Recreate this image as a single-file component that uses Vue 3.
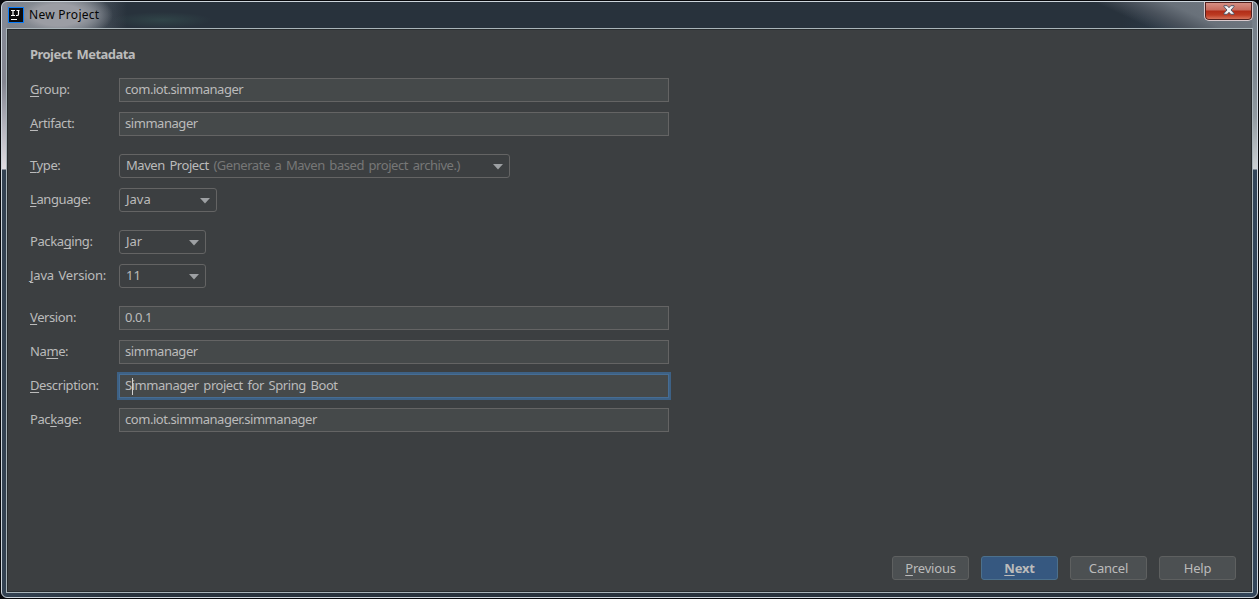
<script setup>
const groups = [
  [
    { pre: '', key: 'G', post: 'roup:', kind: 'input', value: 'com.iot.simmanager' },
    { pre: '', key: 'A', post: 'rtifact:', kind: 'input', value: 'simmanager' },
  ],
  [
    { pre: '', key: 'T', post: 'ype:', kind: 'select', size: 'wide', value: 'Maven Project', note: '(Generate a Maven based project archive.)' },
    { pre: '', key: 'L', post: 'anguage:', kind: 'select', size: 'medium', value: 'Java' },
  ],
  [
    { pre: 'Packa', key: 'g', post: 'ing:', kind: 'select', size: 'small', value: 'Jar' },
    { pre: '', key: 'J', post: 'ava Version:', kind: 'select', size: 'small', value: '11', loose: true },
  ],
  [
    { pre: '', key: 'V', post: 'ersion:', kind: 'input', value: '0.0.1' },
    { pre: 'Na', key: 'm', post: 'e:', kind: 'input', value: 'simmanager' },
    { pre: '', key: 'D', post: 'escription:', kind: 'input', value: 'Simmanager project for Spring Boot', focused: true },
    { pre: 'Pac', key: 'k', post: 'age:', kind: 'input', value: 'com.iot.simmanager.simmanager' },
  ],
]
</script>

<template>
  <div class="desktop">
    <div class="window">
      <header class="titlebar">
        <svg class="logo" width="16" height="16" viewBox="0 0 16 16">
          <rect width="16" height="16" fill="#087cfa" />
          <rect x="1" y="1" width="14" height="14" fill="#0b0b0d" />
          <path d="M3 3.5h4M5 3.5v5M3 8.5h4M8.5 3.5h3M10.5 3.5v3.7q0 1.3-1.3 1.3H8" fill="none" stroke="#fff" stroke-width="1.2" />
          <path d="M3 12.500h6" stroke="#fff" stroke-width="1" />
        </svg>
        <span class="title">New Project</span>
        <div class="close">
          <svg width="12" height="10" viewBox="0 0 12 10">
            <path d="M1 .7h3.2L6 2.7 7.800 .7H11v1L8 5l3 3.300v1H7.800L6 7.300l-1.800 2H1v-1L4 5 1 1.700z" fill="#f4f4f6" stroke="#535666" stroke-width="1" />
          </svg>
        </div>
      </header>
      <main class="dialog">
        <h1 class="heading">Project Metadata</h1>
        <div class="form">
          <section v-for="(rows, i) in groups" :key="i" class="group">
            <div v-for="row in rows" :key="row.pre + row.key + row.post" class="row">
              <label class="label" :class="{ loose: row.loose }">{{ row.pre }}<span class="mn">{{ row.key }}</span>{{ row.post }}</label>
              <div v-if="row.kind === 'input'" class="input" :class="{ focused: row.focused }">
                <span>{{ row.value }}</span><i v-if="row.focused" class="caret"></i>
              </div>
              <div v-else class="select" :class="row.size">
                <span>{{ row.value }}<span v-if="row.note" class="note">&nbsp;{{ row.note }}</span></span>
                <svg class="arrow" width="10" height="6" viewBox="0 0 10 6"><path d="M0 0h10L5 5.500z" fill="#9da0a3" /></svg>
              </div>
            </div>
          </section>
        </div>
        <footer class="actions">
          <div class="button"><span class="mn">P</span>revious</div>
          <div class="button primary"><span class="mn">N</span>ext</div>
          <div class="button">Cancel</div>
          <div class="button">Help</div>
        </footer>
      </main>
    </div>
  </div>
</template>

<style>
body { background: #050608; overflow: hidden; }
</style>

<style scoped>
* { box-sizing: border-box; }
.desktop {
  width: 1259px;
  height: 599px;
  padding: 1px;
  background: #08090c;
  font-family: "Noto Sans", "Open Sans", sans-serif;
  font-size: 13px;
  color: #bbbbbb;
}
.window {
  width: 1257px;
  height: 597px;
  border: 1px solid #cdd5dc;
  border-radius: 6px;
  padding: 0 4px 4px;
  background:
    linear-gradient(180deg, #848a97 0, #838590 80px, #b5b5be 125px, #e0dde2 167px, transparent 168px) 0 0 / 5px 170px no-repeat,
    linear-gradient(180deg, #737c86 0, #7c868f 70px, #929ba1 115px, #ccd0d3 167px, transparent 168px) 100% 0 / 5px 170px no-repeat,
    radial-gradient(ellipse 54px 24px at 56px 13px, #9b9da4 45%, #858a92 65%, transparent 102%) 0 0 / 200px 26px no-repeat,
    linear-gradient(90deg, #7f858f 0, #6b717a 60px, transparent 125px) 0 0 / 200px 26px no-repeat,
    radial-gradient(ellipse 50px 8px at 160px 18px, #304448, transparent) 0 0 / 300px 26px no-repeat,
    linear-gradient(25deg, transparent 35%, #4a525c 50%, #69717a 64%, #747b84 100%) 100% 0 / 195px 26px no-repeat,
    linear-gradient(90deg, #334252 0, #28323c 120px, #28323c 1120px, #33465a 100%);
}
.titlebar {
  height: 26px;
  display: flex;
  align-items: flex-start;
  padding-left: 2px;
}
.logo { margin-top: 5px; flex: none; }
.title {
  margin-left: 5px;
  line-height: 25px;
  font-size: 12px;
  letter-spacing: 0.28px;
  color: #050505;
}
.close {
  margin-left: auto;
  width: 49px;
  height: 19px;
  border: 1px solid #d9c9cc;
  border-top: 0;
  border-radius: 0 0 5px 5px;
  box-shadow: inset 0 0 0 1px #54201d;
  background: linear-gradient(#d89489 0, #c66b5d 8px, #b12c18 9px, #bd3b22 13px, #dc8068 18px);
  display: flex;
  justify-content: center;
  padding-top: 3px;
}
.dialog {
  height: 565px;
  border: 1px solid #a9b4b9;
  box-shadow: inset 0 0 0 1px #292d2f;
  background: #3c3f41;
  padding: 13px 16px 12px 23px;
  display: flex;
  flex-direction: column;
}
.heading {
  margin: 0;
  height: 24px;
  line-height: 24px;
  font-size: 13px;
  font-weight: 700;
  letter-spacing: -0.55px;
  word-spacing: 1.8px;
}
.form {
  margin-top: 12px;
  display: flex;
  flex-direction: column;
  gap: 18px;
}
.group { display: flex; flex-direction: column; gap: 10px; }
.row { display: flex; height: 24px; }
.label { width: 89px; line-height: 23px; white-space: nowrap; letter-spacing: -0.4px; }
.label.loose { letter-spacing: -0.2px; word-spacing: 1.4px; }
.mn { text-decoration: underline; text-underline-offset: 2px; text-decoration-thickness: 1px; text-decoration-skip-ink: none; }
.input {
  width: 550px;
  border: 1px solid #646464;
  background: #45494a;
  padding-left: 5px;
  line-height: 21px;
  position: relative;
  white-space: pre;
  letter-spacing: -0.45px;
  word-spacing: 1.8px;
}
.input.focused { border-color: #466d94; box-shadow: 0 0 0 2px #3d6185; }
.caret { position: absolute; left: 12px; top: 3px; width: 1px; height: 17px; background: #d0d0d0; }
.select {
  border: 1px solid #646464;
  border-radius: 3px;
  padding: 0 6px;
  line-height: 21px;
  display: flex;
  justify-content: space-between;
  align-items: flex-start;
  white-space: nowrap;
}
.wide { width: 391px; letter-spacing: -0.45px; word-spacing: 1.7px; }
.medium { width: 98px; }
.small { width: 87px; }
.note { color: #777777; }
.arrow { margin-top: 9px; flex: none; }
.actions { margin-top: auto; display: flex; justify-content: flex-end; gap: 12px; }
.button {
  width: 77px;
  height: 24px;
  border: 1px solid #5e6060;
  border-radius: 3px;
  background: #4c5052;
  line-height: 23px;
  text-align: center;
  letter-spacing: -0.2px;
}
.primary { background: #365880; border-color: #4c708c; font-weight: 700; }
</style>
